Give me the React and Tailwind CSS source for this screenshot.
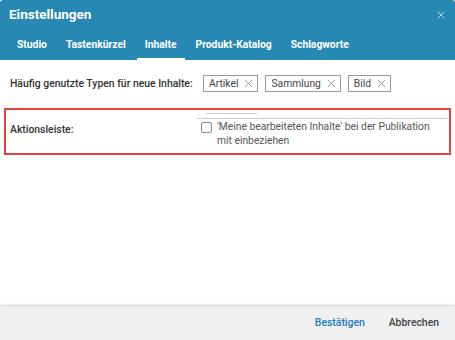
import React from "react";

const tabs = ["Studio", "Tastenkürzel", "Inhalte", "Produkt-Katalog", "Schlagworte"];
const tags = ["Artikel", "Sammlung", "Bild"];

const XIcon = ({ className, w = 1.1 }) => (
    <svg viewBox="0 0 10 10" className={className} fill="none" stroke="currentColor" strokeWidth={w}>
        <path d="M1 1L9 9M9 1L1 9" />
    </svg>
);

export default function App() {
    return (
        <div className="w-[455px] h-[340px] bg-white flex flex-col overflow-hidden rounded-t-[3px] font-['Roboto',sans-serif]">
            {/* header */}
            <div className="bg-[#2789b3] text-white">
                <div className="h-[29px] flex items-center justify-between pl-[9px] pr-[10px]">
                    <span className="text-[13.5px] font-bold">Einstellungen</span>
                    <XIcon className="w-[8px] h-[8px] text-[#cfe3ee]" />
                </div>
                <div className="h-[31px] flex items-stretch pl-[9px] gap-[3px]">
                    {tabs.map((t) => (
                        <div
                            key={t}
                            className={`px-2 pt-[2px] flex items-center text-[10.3px] font-bold border-b-2 ${t === "Inhalte" ? "border-white" : "border-transparent"}`}
                        >
                            {t}
                        </div>
                    ))}
                </div>
            </div>

            {/* body */}
            <div className="flex-1 px-[4px] pt-[15px]">
                <div className="flex items-center px-[6px] h-[17px]">
                    <span className="text-[10.4px] font-medium text-[#333] w-[193px] whitespace-nowrap">Häufig genutzte Typen für neue Inhalte:</span>
                    <div className="flex gap-[7px]">
                        {tags.map((t) => (
                            <div key={t} className="h-[17px] flex items-center gap-[6px] border border-[#999] pl-[5px] pr-[4px] text-[10.3px] text-[#444]">
                                {t}
                                <XIcon className="w-[9px] h-[9px] text-[#888]" w={0.9} />
                            </div>
                        ))}
                    </div>
                </div>

                <div className="mt-[16px] h-[47px] border-2 border-[#e5433e] flex">
                    <div className="w-[191px] pl-[4px] pt-[12px] text-[10.4px] font-medium text-[#333]">Aktionsleiste:</div>
                    <div className="flex-1 pr-[2px] pt-[3px]">
                        <div className="ml-[9px] w-[51px] border-t border-[#ccc]" />
                        <div className="mt-[4px] border-t border-[#ccc]" />
                        <div className="flex items-start gap-[5px] pl-[4px] pt-[1px]">
                            <div className="mt-[2px] w-[11px] h-[11px] border border-[#888] rounded-[2px] shrink-0" />
                            <span className="text-[10.3px] leading-[14px] text-[#555]">'Meine bearbeiteten Inhalte' bei der Publikation mit einbeziehen</span>
                        </div>
                    </div>
                </div>
            </div>

            {/* footer */}
            <div className="h-[35px] bg-[#f0f0f0] border-t border-[#d8d8d8] shadow-[0_-1px_2px_rgba(0,0,0,0.06)] flex items-center justify-end pr-[16px] gap-[24px] text-[10.4px] font-medium">
                <span className="text-[#1b7bbf]">Bestätigen</span>
                <span className="text-[#444]">Abbrechen</span>
            </div>
        </div>
    );
}
